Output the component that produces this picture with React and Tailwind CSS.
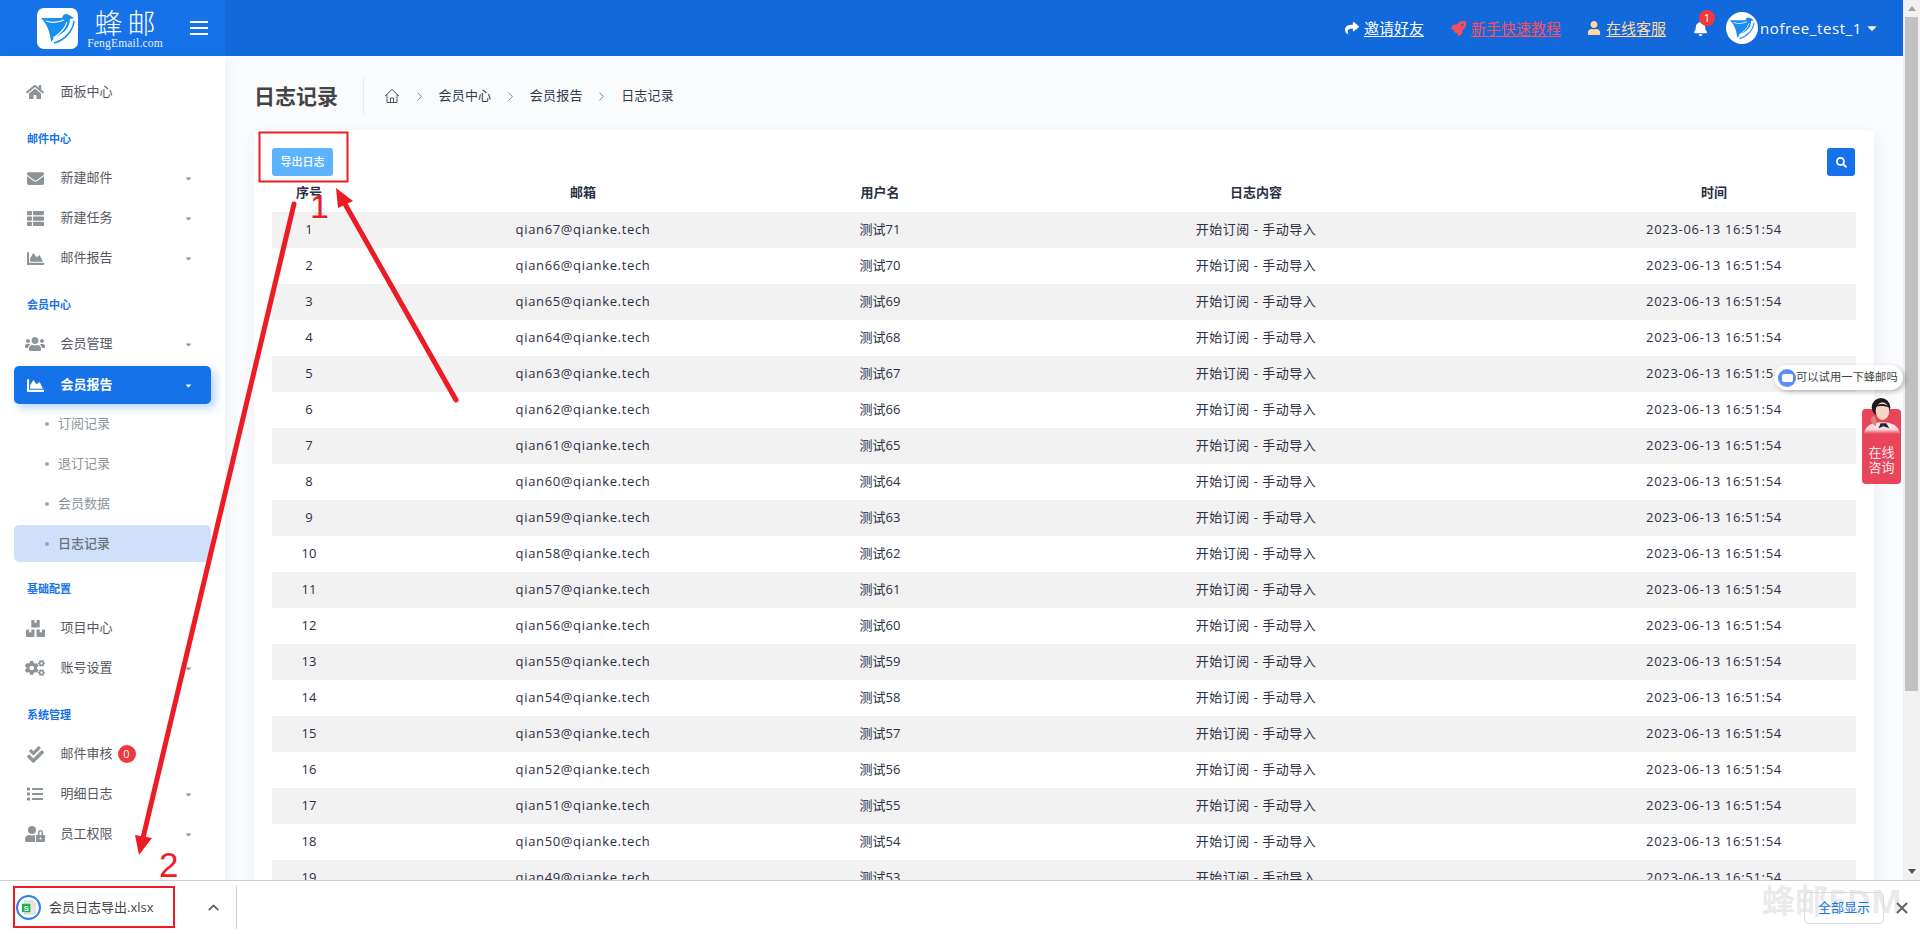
import React from "react";
import {
  FaHome, FaEnvelope, FaThList, FaChartArea, FaUsers, FaBoxes, FaCogs, FaCheckDouble, FaList, FaUserLock,
  FaShare, FaRocket, FaUser, FaBell, FaSearch, FaCaretDown,
} from "react-icons/fa";
import { ChevronRight, ChevronUp, X } from "lucide-react";

function Bird({ className }) {
  return (
    <svg viewBox="0 0 41 41" className={className}>
      <path d="M4 10 L25 10 C26 6 29 5 32 7 L37 10 L33 11 C33 19 27 26 18 29 L14 34 C13 24 10 16 4 10 Z" fill="#1b8ff0" />
      <path d="M9 13 C14 15 20 15 27 12 M16 30 C23 26 28 21 30 14" fill="none" stroke="#ffffff" strokeWidth="1.1" />
      <path d="M37 13 C36 23 28 32 17 35" fill="none" stroke="#1b8ff0" strokeWidth="1.6" />
    </svg>
  );
}

function Section({ children }) {
  return (
    <div className="h-[46px] flex items-end pb-[12px] pl-[27px] text-[11px] leading-[14px] font-bold text-[#1572e8]">
      {children}
    </div>
  );
}

function NavItem({ icon: Icon, label, caret, badge, size = 16 }) {
  return (
    <div className="h-10 flex items-center relative pl-[25px] pr-[32px] text-[13px] text-[#575962]">
      <span className="w-[20px] flex justify-center text-[#8d9498]">
        <Icon size={size} />
      </span>
      <span className="ml-[15.5px]">{label}</span>
      {badge !== undefined && (
        <span className="ml-[5px] w-[18px] h-[18px] rounded-full bg-[#f03a3f] text-white text-[11px] flex items-center justify-center">
          {badge}
        </span>
      )}
      {caret && <FaCaretDown size={9} className="ml-auto text-[#8d9498]" />}
    </div>
  );
}

function SubItem({ label, active }) {
  return (
    <div
      className={
        active
          ? "h-[37px] mt-px mx-[14px] rounded-[5px] bg-[#cfe1fa] flex items-center pl-[31px] text-[13px] font-medium text-[#6c7077]"
          : "h-10 mx-[14px] flex items-center pl-[31px] text-[13px] text-[#8d9498]"
      }
    >
      <span className="w-[4px] h-[4px] rounded-full bg-[#a0a5a9] mr-[9px]" />
      {label}
    </div>
  );
}

function Sidebar() {
  return (
    <aside className="w-[225px] shrink-0 bg-white pt-4 shadow-[4px_4px_10px_rgba(69,65,78,0.06)] z-10">
      <NavItem icon={FaHome} label="面板中心" size={18} />
      <Section>邮件中心</Section>
      <NavItem icon={FaEnvelope} label="新建邮件" caret size={17} />
      <NavItem icon={FaThList} label="新建任务" caret size={17} />
      <NavItem icon={FaChartArea} label="邮件报告" caret size={17} />
      <Section>会员中心</Section>
      <NavItem icon={FaUsers} label="会员管理" caret size={20} />
      <div className="h-[38px] mt-[2px] mx-[14px] rounded-[5px] bg-[#1572e8] shadow-[4px_4px_10px_rgba(21,114,232,0.3)] flex items-center pl-[11px] pr-[18px] text-[13px] font-bold text-white">
        <span className="w-[20px] flex justify-center">
          <FaChartArea size={17} />
        </span>
        <span className="ml-[15.5px]">会员报告</span>
        <FaCaretDown size={9} className="ml-auto" />
      </div>
      <SubItem label="订阅记录" />
      <SubItem label="退订记录" />
      <SubItem label="会员数据" />
      <SubItem label="日志记录" active />
      <Section>基础配置</Section>
      <NavItem icon={FaBoxes} label="项目中心" size={19} />
      <NavItem icon={FaCogs} label="账号设置" caret size={20} />
      <Section>系统管理</Section>
      <NavItem icon={FaCheckDouble} label="邮件审核" badge={0} size={17} />
      <NavItem icon={FaList} label="明细日志" caret size={16} />
      <NavItem icon={FaUserLock} label="员工权限" caret size={20} />
    </aside>
  );
}

function Header() {
  return (
    <header className="h-14 shrink-0 flex bg-[#1269db] text-white">
      <div className="w-[225px] shrink-0 bg-[#1572e8] flex items-center pl-[37px]">
        <div className="w-[41px] h-[41px] rounded-[7px] bg-white shrink-0 flex items-center justify-center">
          <Bird className="w-[41px] h-[41px]" />
        </div>
        <div className="ml-[10px] w-[74px] flex flex-col items-center">
          <span className="text-[28px] leading-[30px] font-light tracking-[5px] pl-[5px] whitespace-nowrap">蜂邮</span>
          <span className="-mt-[1px] font-['Liberation_Serif',serif] text-[11.5px] leading-[12px] tracking-[0.2px] whitespace-nowrap text-[#e8f1fd]">
            FengEmail.com
          </span>
        </div>
        <div className="ml-[28px] w-[18px] flex flex-col gap-[4px]">
          <span className="h-[2px] bg-white" />
          <span className="h-[2px] bg-white" />
          <span className="h-[2px] bg-white" />
        </div>
      </div>
      <div className="flex-1 flex items-center justify-end pr-[24px]">
        <a className="flex items-center text-[15px] underline underline-offset-2">
          <FaShare size={14} className="mr-[5px]" /> 邀请好友
        </a>
        <a className="ml-[27px] flex items-center text-[15px] text-[#fb4d5c] underline underline-offset-2">
          <FaRocket size={15} className="mr-[5px]" /> 新手快速教程
        </a>
        <a className="ml-[26px] flex items-center text-[15px] text-[#ffd9a0] underline underline-offset-2">
          <FaUser size={14} className="mr-[5px]" /> 在线客服
        </a>
        <div className="ml-[27px] relative text-white">
          <FaBell size={15} />
          <span className="absolute -top-[11px] left-[6px] w-[16px] h-[16px] rounded-full bg-[#f03a3f] text-[11px] leading-[16px] text-center">
            1
          </span>
        </div>
        <div className="ml-[18px] w-8 h-8 rounded-full bg-white flex items-center justify-center overflow-hidden">
          <Bird className="w-[30px] h-[30px]" />
        </div>
        <span className="ml-[2px] text-[15px] tracking-[0.6px]">nofree_test_1</span>
        <FaCaretDown size={14} className="ml-[3px]" />
      </div>
    </header>
  );
}

const GRID = "grid grid-cols-[74px_474px_120px_632px_284px] items-center text-center";

function Table() {
  const rows = Array.from({ length: 20 }, (_, i) => i);
  return (
    <div>
      <div className={GRID + " h-9 font-bold pb-[2px]"}>
        <span>序号</span>
        <span>邮箱</span>
        <span>用户名</span>
        <span>日志内容</span>
        <span>时间</span>
      </div>
      {rows.map((i) => (
        <div key={i} className={GRID + (i % 2 === 0 ? " h-9 bg-[#f2f2f2]" : " h-9 bg-white")}>
          <span>{i + 1}</span>
          <span className="tracking-[0.65px]">qian{67 - i}@qianke.tech</span>
          <span>测试{71 - i}</span>
          <span className="tracking-[0.5px]">开始订阅 - 手动导入</span>
          <span className="tracking-[0.7px]">2023-06-13 16:51:54</span>
        </div>
      ))}
    </div>
  );
}

function Crumb() {
  return <ChevronRight size={15} strokeWidth={1} className="ml-[11.5px] mr-[12px] text-[#3b4358]" />;
}

function Main() {
  return (
    <main className="flex-1 min-w-0 overflow-hidden bg-[#f9fbfd] pl-[29px] pr-[29px]">
      <div className="h-[74px] flex items-center">
        <h1 className="text-[21px] font-bold text-[#444444] w-[110px] leading-[40px] mt-[6px] border-r border-[#e9ebef] shrink-0">
          日志记录
        </h1>
        <nav className="ml-[20px] mt-[6px] flex items-center text-[13px] tracking-[0.2px] text-[#333a4d]">
          <svg viewBox="0 0 16 16" className="w-4 h-4" fill="none" stroke="#3b4358" strokeWidth="0.9">
            <path d="M1 8 L8 1.5 L15 8 M3 6.5 V14.5 H13 V6.5 M6.5 14.5 V10 H9.5 V14.5" />
          </svg>
          <Crumb />
          <span>会员中心</span>
          <Crumb />
          <span>会员报告</span>
          <Crumb />
          <span>日志记录</span>
        </nav>
      </div>
      <section className="bg-white rounded-[5px] shadow-[2px_6px_15px_rgba(69,65,78,0.08)] px-[18px] pt-[18px] text-[13px] text-[#2a2f45]">
        <div className="flex justify-between h-[28px]">
          <button className="w-[61px] h-[28px] rounded-[3px] bg-[#5db3fd] text-white text-[11px] font-medium">导出日志</button>
          <button className="mr-px w-[28px] h-[28px] rounded-[3px] bg-[#1572e8] text-white flex items-center justify-center">
            <FaSearch size={11} />
          </button>
        </div>
        <Table />
      </section>
    </main>
  );
}

function Scrollbar() {
  return (
    <div className="w-[17px] shrink-0 bg-[#f1f1f1] flex flex-col items-center relative">
      <div className="h-[17px] flex items-center justify-center">
        <span className="w-0 h-0 border-x-[4px] border-x-transparent border-b-[5px] border-b-[#a3a3a3]" />
      </div>
      <div className="w-[13px] h-[674px] bg-[#c1c1c1]" />
      <div className="mt-auto h-[17px] flex items-center justify-center">
        <span className="w-0 h-0 border-x-[4px] border-x-transparent border-t-[5px] border-t-[#505050]" />
      </div>
    </div>
  );
}

function DownloadBar() {
  return (
    <footer className="h-[54px] shrink-0 bg-white border-t border-[#cfcfcf] flex items-center relative z-20">
      <div className="w-[237px] h-[43px] flex items-center border-r border-[#cfcfcf] pl-[16px] pr-[14px]">
        <span className="w-[25px] h-[25px] rounded-full border-2 border-[#2f80ed] flex items-center justify-center shrink-0">
          <svg viewBox="0 0 16 16" className="w-[15px] h-[15px]">
            <path d="M4 1 H12 L15 4 V15 H4 Z" fill="#e4e7ea" stroke="#b9bec4" strokeWidth="0.6" />
            <rect x="1" y="4" width="9" height="9" fill="#1fb254" />
            <text x="5.5" y="11.5" textAnchor="middle" fontSize="8" fill="#fff" fontWeight="700" fontFamily="Liberation Sans">S</text>
          </svg>
        </span>
        <span className="ml-[8px] mt-px text-[13px] text-[#444] whitespace-nowrap">会员日志导出.xlsx</span>
        <ChevronUp size={17} strokeWidth={2.5} className="ml-auto text-[#5f6368]" />
      </div>
      <span className="absolute left-[1762px] top-[2px] text-[33px] leading-[36px] font-bold text-[#bdbdbd] opacity-30 whitespace-nowrap pointer-events-none">
        蜂邮EDM
      </span>
      <div className="relative ml-auto mr-[9px] flex items-center">
        <button className="w-[80px] h-[32px] rounded-[5px] border border-[#dadce0] text-[13px] text-[#1a73e8]">全部显示</button>
        <X size={18} strokeWidth={2.5} className="ml-[9px] text-[#5f6368]" />
      </div>
    </footer>
  );
}

function ChatWidget() {
  return (
    <div className="absolute left-[1773px] top-[365px] w-[130px] flex flex-col items-end">
      <div className="w-[129px] h-[25px] rounded-full bg-white shadow-[2px_2px_5px_rgba(0,0,0,0.25)] flex items-center pl-[4px] text-[11.3px] text-[#444] whitespace-nowrap">
        <span className="w-[18px] h-[18px] rounded-full bg-[#5b8dfb] flex items-center justify-center shrink-0">
          <span className="w-[11px] h-[8px] rounded-[2px] bg-white" />
        </span>
        可以试用一下蜂邮吗
      </div>
      <div className="relative mt-[19px] mr-[2px] w-[39px] h-[75px] rounded-[4px] bg-[#e8455a] flex flex-col items-center justify-end pb-[9px] text-[13px] leading-[15px] text-[#fde4e6]">
        <span>在线</span>
        <span>咨询</span>
        <svg viewBox="0 0 40 38" className="absolute -top-[12px] left-0 w-[39px] h-[37px]">
          <defs>
            <linearGradient id="shirt" x1="0" y1="0" x2="0" y2="1">
              <stop offset="0" stopColor="#fbf0ef" />
              <stop offset="0.6" stopColor="#f6d9d9" />
              <stop offset="1" stopColor="#e8455a" />
            </linearGradient>
          </defs>
          <path d="M2 38 C3 29 11 26 20 26 C30 26 38 29 39 38 Z" fill="url(#shirt)" />
          <path d="M19 27 L25 27 L28 32 L22 30 L17 32 Z" fill="#23233a" />
          <circle cx="19.5" cy="10.5" r="9.5" fill="#1c1a1f" />
          <ellipse cx="21" cy="14.5" rx="7" ry="9" fill="#f6d5c3" />
          <path d="M13 10 C17 6 25 6 29 11 C24 9 18 9 13 10 Z" fill="#1c1a1f" />
          <path d="M10 27 C8 22 10 19 13 20 C15 23 15 27 14 30 Z" fill="#d9837e" />
        </svg>
      </div>
    </div>
  );
}

function Annotations() {
  const red = "#ed1c24";
  return (
    <svg className="absolute inset-0 w-[1920px] h-[934px] pointer-events-none z-30" viewBox="0 0 1920 934">
      <rect x="259.5" y="132.5" width="88" height="49" fill="none" stroke={red} strokeWidth="2" />
      <rect x="14" y="887" width="160" height="40" fill="none" stroke={red} strokeWidth="2" />
      <path d="M456 400 L345 204" stroke={red} strokeWidth="5" strokeLinecap="round" fill="none" />
      <polygon points="336,188 353,201 338,208" fill={red} />
      <path d="M294 204 L143 838" stroke={red} strokeWidth="5" strokeLinecap="round" fill="none" />
      <polygon points="139,855 135,835 152,838" fill={red} />
      <text x="310" y="218" fontSize="34" fill={red} fontFamily="Liberation Sans">1</text>
      <text x="159" y="877" fontSize="35" fill={red} fontFamily="Liberation Sans">2</text>
    </svg>
  );
}

export default function App() {
  return (
    <div className="relative w-[1920px] h-[934px] overflow-hidden flex flex-col bg-white font-['Open_Sans','Noto_Sans_CJK_SC',sans-serif]">
      <div className="flex-1 min-h-0 flex">
        <div className="w-[1903px] shrink-0 flex flex-col min-h-0">
          <Header />
          <div className="flex-1 min-h-0 flex">
            <Sidebar />
            <Main />
          </div>
        </div>
        <Scrollbar />
      </div>
      <DownloadBar />
      <ChatWidget />
      <Annotations />
    </div>
  );
}
